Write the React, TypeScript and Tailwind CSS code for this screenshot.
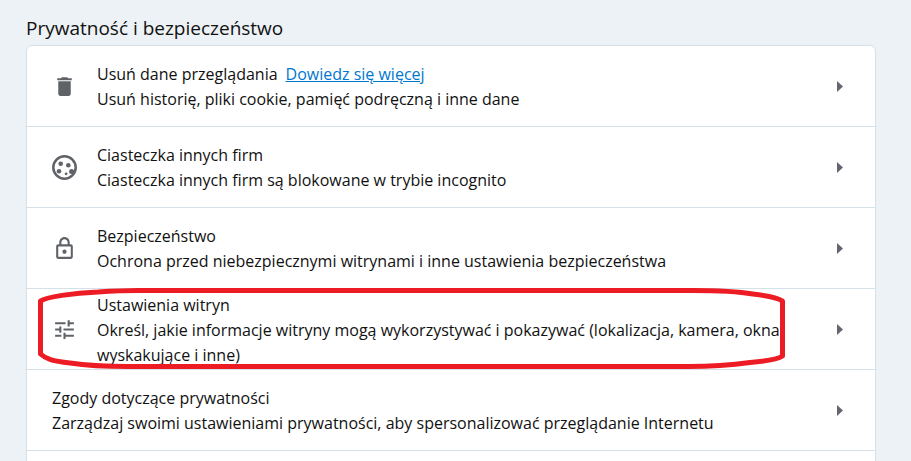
import type { ReactNode } from "react";

const icons = {
  trash: "M6 19c0 1.1.9 2 2 2h8c1.1 0 2-.9 2-2V7H6v12zM19 4h-3.5l-1-1h-5l-1 1H5v2h14V4z",
  lock: "M18 8h-1V6c0-2.76-2.24-5-5-5S7 3.24 7 6v2H6c-1.1 0-2 .9-2 2v10c0 1.1.9 2 2 2h12c1.1 0 2-.9 2-2V10c0-1.1-.9-2-2-2zM9 6c0-1.66 1.34-3 3-3s3 1.34 3 3v2H9V6zm9 14H6V10h12v10zm-6-3c1.1 0 2-.9 2-2s-.9-2-2-2-2 .9-2 2 .9 2 2 2z",
  tune: "M3 17v2h6v-2H3zM3 5v2h10V5H3zm10 16v-2h8v-2h-8v-2h-2v6h2zM7 9v2H3v2h4v2h2V9H7zm14 4v-2H11v2h10zm-6-4h2V7h4V5h-4V3h-2v6z",
};

function Icon({ path }: { path: string }) {
  return (
    <svg className="size-[25px]" viewBox="0 0 24 24" fill="currentColor" aria-hidden="true">
      <path d={path} />
    </svg>
  );
}

function CookieIcon() {
  return (
    <svg className="size-[25px]" viewBox="0 0 25 25" fill="currentColor" aria-hidden="true">
      <circle cx="12.5" cy="12.5" r="11.2" fill="none" stroke="currentColor" strokeWidth="2.5" />
      <circle cx="8.7" cy="8.7" r="2.3" />
      <circle cx="16.3" cy="10.2" r="2.3" />
      <circle cx="7" cy="16.3" r="2.3" />
      <circle cx="14.1" cy="18.8" r="1.4" />
      <circle cx="19.6" cy="16.6" r="2.5" />
    </svg>
  );
}

function MarkerOutline() {
  return (
    <svg className="pointer-events-none absolute -top-px left-[11px] h-[81px] w-[747px]" viewBox="0 0 747 81" fill="none" aria-hidden="true">
      <path
        d="M2.5 13C8 9 35 5 60 4C75 3 85 2.5 100 2.5H655C680 2.5 703 4 715 6C732 8 740 10 744.5 13V68C740 71 730 73 712 74.5C694 77 680 78.5 650 78.5H90C70 78.5 45 77 32 75C14 73 8 71 2.5 66Z"
        stroke="#ed1c24"
        strokeWidth="5"
        strokeLinejoin="round"
      />
    </svg>
  );
}

type RowProps = {
  icon?: ReactNode;
  title: string;
  link?: string;
  description: string;
  highlighted?: boolean;
};

function Row({ icon, title, link, description, highlighted }: RowProps) {
  return (
    <li className="relative flex min-h-[81px] items-center border-b border-[#d5e1e8] pr-[23px] pl-[25px]">
      {icon && <div className="mr-5 flex w-[25px] shrink-0 justify-center text-[#5f6368]">{icon}</div>}
      <div className="max-w-[690px] flex-1 pt-0.5">
        <h2>
          {title}
          {link && <a className="ml-2 text-[#0078d0] underline" href="#more">{link}</a>}
        </h2>
        <p>{description}</p>
      </div>
      <button className="ml-auto flex size-6 items-center justify-center text-[#65656f]" aria-label={title}>
        <svg className="h-[11px] w-[6px]" viewBox="0 0 6 11" fill="currentColor" aria-hidden="true">
          <path d="M0 0l6 5.5L0 11z" />
        </svg>
      </button>
      {highlighted && <MarkerOutline />}
    </li>
  );
}

export default function App() {
  return (
    <main className="h-screen overflow-hidden bg-[#edf2f6] pt-4 pr-[35px] pl-[26px] font-['Open_Sans',sans-serif] text-base leading-[25px] text-[#111]">
      <h1 className="mb-[5px] text-[19px] leading-6">Prywatność i bezpieczeństwo</h1>
      <ul className="rounded-t-md border border-[#d5e1e8] bg-white pb-10">
        <Row
          icon={<Icon path={icons.trash} />}
          title="Usuń dane przeglądania"
          link="Dowiedz się więcej"
          description="Usuń historię, pliki cookie, pamięć podręczną i inne dane"
        />
        <Row
          icon={<CookieIcon />}
          title="Ciasteczka innych firm"
          description="Ciasteczka innych firm są blokowane w trybie incognito"
        />
        <Row
          icon={<Icon path={icons.lock} />}
          title="Bezpieczeństwo"
          description="Ochrona przed niebezpiecznymi witrynami i inne ustawienia bezpieczeństwa"
        />
        <Row
          icon={<Icon path={icons.tune} />}
          title="Ustawienia witryn"
          description="Określ, jakie informacje witryny mogą wykorzystywać i pokazywać (lokalizacja, kamera, okna wyskakujące i inne)"
          highlighted
        />
        <Row
          title="Zgody dotyczące prywatności"
          description="Zarządzaj swoimi ustawieniami prywatności, aby spersonalizować przeglądanie Internetu"
        />
      </ul>
    </main>
  );
}
